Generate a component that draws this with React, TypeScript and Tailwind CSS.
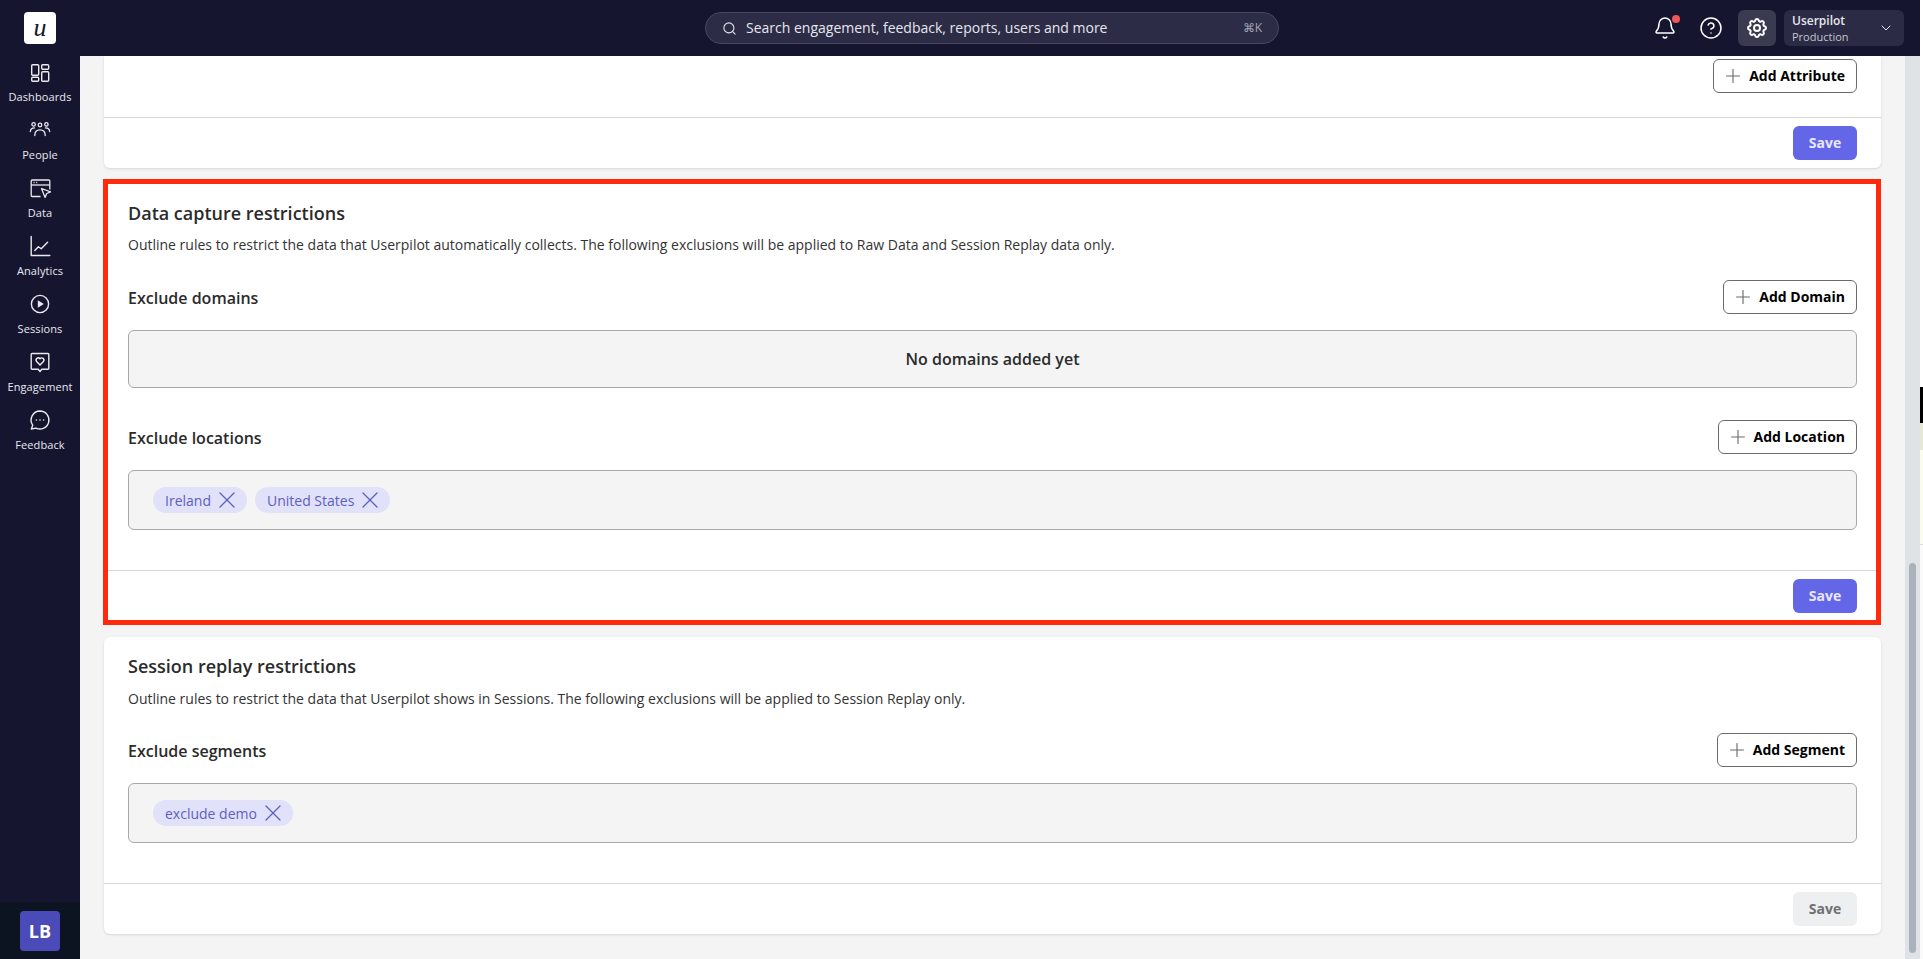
import type { ReactNode } from 'react';
import { Bell, ChevronDown, CircleHelp, Plus, Search, X } from 'lucide-react';
import { HiOutlineCog } from 'react-icons/hi';

const font = { fontFamily: '"Open Sans", "Noto Sans", sans-serif' };

function DashboardsIcon() {
  return (
    <svg viewBox="0 0 24 24" className="w-6 h-6" fill="none" stroke="currentColor" strokeWidth="1.4">
      <rect x="3.7" y="4.7" width="7" height="10.6" rx="1" />
      <rect x="13.7" y="4.7" width="7" height="4.6" rx="1" />
      <rect x="3.7" y="17.2" width="7" height="4" rx="1" />
      <rect x="13.7" y="11.7" width="7" height="9.6" rx="1" />
    </svg>
  );
}

function PeopleIcon() {
  return (
    <svg viewBox="0 0 24 24" className="w-6 h-6" fill="none" stroke="currentColor" strokeWidth="1.3" strokeLinecap="round">
      <circle cx="5.6" cy="6.4" r="1.7" />
      <circle cx="12" cy="7" r="1.8" />
      <circle cx="18.4" cy="6.4" r="1.7" />
      <path d="M2.3 13.5c.3-2.4 1.6-3.6 4.2-3.6" />
      <path d="M21.7 13.5c-.3-2.4-1.6-3.6-4.2-3.6" />
      <path d="M6.8 17.5c0-3.4 1.9-5.6 5.2-5.6s5.2 2.2 5.2 5.6" />
    </svg>
  );
}

function DataIcon() {
  return (
    <svg viewBox="0 0 24 24" className="w-6 h-6" fill="none" stroke="currentColor" strokeWidth="1.3" strokeLinejoin="round">
      <path d="M12.5 20.5H4.2a1 1 0 0 1-1-1V5a1 1 0 0 1 1-1h16.6a1 1 0 0 1 1 1v8.5" />
      <path d="M3.2 9h18.6" />
      <path d="M5.6 6.5h1M8.2 6.5h1" />
      <path d="M13.5 12.5l9 3.4-3.8 1.6-1.6 3.9z" />
    </svg>
  );
}

function AnalyticsIcon() {
  return (
    <svg viewBox="0 0 24 24" className="w-6 h-6" fill="none" stroke="currentColor" strokeWidth="1.4" strokeLinecap="round" strokeLinejoin="round">
      <path d="M3.2 2.5v19h18.6" />
      <path d="M6.8 16.5l3.6-3.8 2.8 2 6.4-6.4" />
    </svg>
  );
}

function SessionsIcon() {
  return (
    <svg viewBox="0 0 24 24" className="w-6 h-6" fill="none" stroke="currentColor" strokeWidth="1.4">
      <circle cx="12" cy="12" r="8.6" />
      <path d="M9.8 8.2l6 3.8-6 3.8z" fill="currentColor" stroke="none" />
    </svg>
  );
}

function EngagementIcon() {
  return (
    <svg viewBox="0 0 24 24" className="w-6 h-6" fill="none" stroke="currentColor" strokeWidth="1.4" strokeLinejoin="round">
      <path d="M4 3.5h16a.8.8 0 0 1 .8.8v14.2a.8.8 0 0 1-.8.8h-6.2L12 21.5l-1.8-2.2H4a.8.8 0 0 1-.8-.8V4.3a.8.8 0 0 1 .8-.8z" />
      <path d="M12 15l-3.4-3.5a2.2 2.2 0 0 1 3.4-2.8 2.2 2.2 0 0 1 3.4 2.8z" />
    </svg>
  );
}

function FeedbackIcon() {
  return (
    <svg viewBox="0 0 24 24" className="w-6 h-6" fill="none" stroke="currentColor" strokeWidth="1.4" strokeLinejoin="round">
      <path d="M12 3a9 9 0 1 1-4 17.1l-4.6.9 1.3-3.9A9 9 0 0 1 12 3z" />
      <circle cx="8.4" cy="12" r=".8" fill="currentColor" stroke="none" />
      <circle cx="12" cy="12" r=".8" fill="currentColor" stroke="none" />
      <circle cx="15.6" cy="12" r=".8" fill="currentColor" stroke="none" />
    </svg>
  );
}

const navItems: { label: string; icon: ReactNode }[] = [
  { label: 'Dashboards', icon: <DashboardsIcon /> },
  { label: 'People', icon: <PeopleIcon /> },
  { label: 'Data', icon: <DataIcon /> },
  { label: 'Analytics', icon: <AnalyticsIcon /> },
  { label: 'Sessions', icon: <SessionsIcon /> },
  { label: 'Engagement', icon: <EngagementIcon /> },
  { label: 'Feedback', icon: <FeedbackIcon /> },
];

function Sidebar() {
  return (
    <aside className="w-20 shrink-0 flex flex-col bg-[#15152f] text-[#e9eaef]">
      <div className="h-[58px] shrink-0" />
      {navItems.map(item => (
        <div key={item.label} className="h-[58px] shrink-0 flex flex-col items-center pt-[2px]">
          {item.icon}
          <span className="mt-[5px] text-[11px] leading-4 font-medium tracking-[0.1px] whitespace-nowrap">{item.label}</span>
        </div>
      ))}
      <div className="mt-auto h-[57px] bg-[#0d1421] flex items-center justify-center">
        <div className="w-10 h-10 rounded bg-[#4a4ab8] flex items-center justify-center text-white text-lg font-bold">LB</div>
      </div>
    </aside>
  );
}

function TopBar() {
  return (
    <header className="h-14 shrink-0 bg-[#15152f] flex items-center pl-6 pr-4 text-white relative">
      <div className="w-8 h-8 rounded bg-white flex items-center justify-center text-[#16162f] text-[26px] leading-none italic" style={{ fontFamily: '"Liberation Serif", serif' }}>
        u
      </div>
      <div className="ml-[649px] w-[574px] h-8 rounded-full bg-[#2c2c47] border border-[#47475f] flex items-center pl-4 pr-4">
        <Search className="w-[15px] h-[15px] text-[#e6e7ec]" strokeWidth={1.75} />
        <span className="ml-[9px] text-sm text-[#e6e7ec]">Search engagement, feedback, reports, users and more</span>
        <span className="ml-auto text-xs text-[#a3a3b3]">⌘K</span>
      </div>
      <div className="ml-auto flex items-center">
        <div className="relative mr-[22px]">
          <Bell className="w-6 h-6" strokeWidth={1.5} />
          <span className="absolute -top-px -right-[3px] w-2 h-2 rounded-full bg-[#f0565a]" />
        </div>
        <CircleHelp className="w-6 h-6 mr-[15px]" strokeWidth={1.5} />
        <div className="w-[38px] h-9 rounded-md bg-[#3a3a50] flex items-center justify-center">
          <HiOutlineCog className="w-6 h-6" />
        </div>
        <div className="ml-2 w-[120px] h-9 rounded-md bg-[#2b2b45] flex items-center pl-2 pr-[10px]">
          <div className="flex flex-col pt-px">
            <span className="text-xs leading-4 font-semibold text-[#e6e7ec]">Userpilot</span>
            <span className="text-[11px] leading-4 text-[#c4c5cf]">Production</span>
          </div>
          <ChevronDown className="ml-auto w-4 h-4 text-[#e6e7ec]" strokeWidth={1.5} />
        </div>
      </div>
    </header>
  );
}

function AddButton({ label, width }: { label: string; width: string }) {
  return (
    <button className={`h-[34px] ${width} rounded-md border border-[#6b6b6b] bg-white flex items-center justify-end pr-[11px] gap-[5px] text-sm font-bold text-black`}>
      <Plus className="w-[22px] h-[22px] text-[#6b6b6b]" strokeWidth={1.25} />
      {label}
    </button>
  );
}

function SaveButton({ disabled }: { disabled?: boolean }) {
  return (
    <button
      className={`w-16 h-[34px] rounded-md text-sm font-bold ${disabled ? 'bg-[#eeeff1] text-[#6f7074]' : 'bg-[#6466e8] text-[#e8e8fb]'}`}
    >
      Save
    </button>
  );
}

function Chip({ label }: { label: string }) {
  return (
    <span className="h-[26px] pl-[12px] pr-[6px] rounded-full bg-[#e1e1fa] text-[#5d5fc0] text-sm flex items-center gap-[2px]">
      <span className="pt-[2px]">{label}</span>
      <X className="w-7 h-7 shrink-0" strokeWidth={1.1} />
    </span>
  );
}

function SectionRow({ title, label, width }: { title: string; label: string; width: string }) {
  return (
    <div className="flex items-center justify-between">
      <h3 className="pt-[2px] text-base font-semibold text-[#2b2b2b]">{title}</h3>
      <AddButton label={label} width={width} />
    </div>
  );
}

function ChipBox({ chips }: { chips: string[] }) {
  return (
    <div className="mt-4 h-[60px] rounded-md border border-[#a8a8a8] bg-[#f4f4f4] px-6 flex items-center gap-2">
      {chips.map(c => <Chip key={c} label={c} />)}
    </div>
  );
}

function Footer({ disabled }: { disabled?: boolean }) {
  return (
    <div className="border-t border-[#d6d6d6] pt-2 flex justify-end pr-6">
      <SaveButton disabled={disabled} />
    </div>
  );
}

function Content() {
  return (
    <main className="flex-1 min-w-0 bg-[#f4f4f4] pl-6 pr-6 overflow-hidden" style={font}>
      {/* first card is scrolled under the top bar */}
      <section className="bg-white rounded-b-md shadow-sm pb-2">
        <div className="pt-[3px] pb-6 pr-6 flex justify-end">
          <AddButton label="Add Attribute" width="w-[144px]" />
        </div>
        <Footer />
      </section>

      <section className="mt-[11px] -ml-px bg-white border-[5px] border-[#ff2a0c]">
        <div className="pt-4 pl-5 pr-[19px]">
          <h2 className="text-lg leading-[26px] font-semibold text-[#2b2b2b]">Data capture restrictions</h2>
          <p className="mt-[9px] text-sm leading-5 text-[#333]">
            Outline rules to restrict the data that Userpilot automatically collects. The following exclusions will be applied to Raw Data and Session Replay data only.
          </p>
          <div className="mt-[25px]">
            <SectionRow title="Exclude domains" label="Add Domain" width="w-[134px]" />
          </div>
          <div className="mt-4 h-[58px] rounded-md border border-[#a8a8a8] bg-[#f4f4f4] flex items-center justify-center text-base font-semibold text-[#2b2b2b]">
            No domains added yet
          </div>
          <div className="mt-8">
            <SectionRow title="Exclude locations" label="Add Location" width="w-[139px]" />
          </div>
          <ChipBox chips={['Ireland', 'United States']} />
        </div>
        <div className="mt-10 pb-[7px]">
          <div className="border-t border-[#d6d6d6] pt-2 flex justify-end pr-[19px]">
            <SaveButton />
          </div>
        </div>
      </section>

      <section className="mt-3 bg-white rounded-md shadow-sm pb-2">
        <div className="pt-4 px-6">
          <h2 className="text-lg leading-[26px] font-semibold text-[#2b2b2b]">Session replay restrictions</h2>
          <p className="mt-[10px] text-sm leading-5 text-[#333]">
            Outline rules to restrict the data that Userpilot shows in Sessions. The following exclusions will be applied to Session Replay only.
          </p>
          <div className="mt-6">
            <SectionRow title="Exclude segments" label="Add Segment" width="w-[140px]" />
          </div>
          <ChipBox chips={['exclude demo']} />
        </div>
        <div className="mt-10">
          <Footer disabled />
        </div>
      </section>
    </main>
  );
}

function Scrollbar() {
  return (
    <div className="w-[15px] shrink-0 bg-[#dfe3e6] pt-[507px] pb-[6px] flex justify-center">
      <div className="w-[7px] h-full rounded-full bg-[#aab3bb]" />
    </div>
  );
}

// sliver of the window behind, visible along the right edge
function EdgeStrip() {
  return (
    <div className="w-[3px] shrink-0 flex flex-col bg-white">
      <div className="h-[387px]" />
      <div className="h-9 bg-black" />
      <div className="h-[27px] bg-[#e4e8d4]" />
      <div className="h-[95px] bg-[#fbfcf0] border-b border-[#dddddd]" />
      <div className="flex-1 bg-[#fafafa]" />
    </div>
  );
}

export default function App() {
  return (
    <div className="h-screen w-screen overflow-hidden flex" style={font}>
      <div className="w-[1920px] shrink-0 flex flex-col">
        <TopBar />
        <div className="flex-1 min-h-0 flex -mt-14">
          <Sidebar />
          <div className="flex-1 min-w-0 flex pt-14">
            <Content />
            <Scrollbar />
          </div>
        </div>
      </div>
      <EdgeStrip />
    </div>
  );
}
